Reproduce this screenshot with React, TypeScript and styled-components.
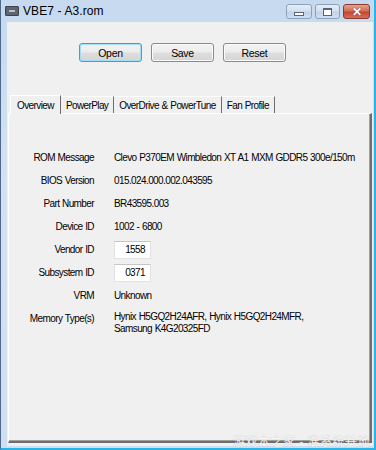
import React from 'react'
import styled, { createGlobalStyle } from 'styled-components'

const GlobalStyle = createGlobalStyle`
  html, body {
    margin: 0;
    padding: 0;
    background: #ffffff;
  }
  body {
    font-family: "Liberation Sans", Arial, sans-serif;
  }
`

const Window = styled.div`
  position: relative;
  width: 376px;
  height: 450px;
  box-sizing: border-box;
  display: flex;
  flex-direction: column;
  background: linear-gradient(to bottom, #c6d9ef 0%, #d3e2f3 40%, #cfdff1 100%);
  border-left: 1px solid #4d6a8c;
  border-bottom: 2px solid #2bb4e8;
  border-right: 2px solid #2bb4e8;
  overflow: hidden;
`

const TitleBar = styled.div`
  height: 22px;
  display: flex;
  align-items: center;
  padding: 0 4px 0 4px;
  flex-shrink: 0;
`

const AppIcon = styled.div`
  width: 12px;
  height: 8px;
  background: #5d6670;
  border: 1px solid #3c434b;
  border-radius: 1px;
  margin-right: 4px;
  display: flex;
  align-items: center;
  justify-content: center;
  &::after {
    content: '';
    width: 6px;
    height: 2px;
    background: #b9c1c9;
  }
`

const TitleText = styled.div`
  font-size: 12px;
  color: #000;
  flex: 1;
  letter-spacing: 0.1px;
`

const Controls = styled.div`
  display: flex;
  gap: 3px;
  align-self: flex-start;
  margin-top: 4px;
`

const CtrlButton = styled.div<{ $close?: boolean; $w: number }>`
  width: ${p => p.$w}px;
  height: 15px;
  box-sizing: border-box;
  border: 1px solid ${p => (p.$close ? '#8a3b30' : '#8ca1bb')};
  border-radius: 3px;
  background: ${p =>
    p.$close
      ? 'linear-gradient(to bottom, #e7a391 0%, #d36c55 45%, #c4452f 55%, #d5705a 100%)'
      : 'linear-gradient(to bottom, #e6eef8 0%, #d3e0ef 45%, #c2d3e8 55%, #d0def0 100%)'};
  display: flex;
  align-items: center;
  justify-content: center;
`

const MinGlyph = styled.div`
  width: 8px;
  height: 2px;
  margin-top: 4px;
  background: #fff;
  border: 1px solid #56657a;
`

const MaxGlyph = styled.div`
  width: 7px;
  height: 5px;
  background: #fff;
  border: 1px solid #56657a;
  border-top-width: 2px;
`

const CloseGlyph = styled.div`
  color: #fff;
  font-size: 12px;
  font-weight: bold;
  line-height: 1;
  text-shadow: 0 0 1px #6a2118;
`

const Client = styled.div`
  flex: 1;
  margin: 0 1px 2px 6px;
  background: #f0f0f0;
  display: flex;
  flex-direction: column;
  position: relative;
  font-size: 10px;
  letter-spacing: -0.6px;
  word-spacing: 0.5px;
`

const ButtonRow = styled.div`
  display: flex;
  justify-content: center;
  gap: 9px;
  padding: 21px 0 0 0;
  margin-left: -15px;
  font-size: 10.5px;
  letter-spacing: -0.3px;
`

const PushButton = styled.div<{ $default?: boolean }>`
  width: 63px;
  height: 19px;
  box-sizing: border-box;
  border: 1px solid ${p => (p.$default ? '#3c9fd8' : '#8a8a8a')};
  box-shadow: ${p => (p.$default ? 'inset 0 0 0 1px #a6dcf5' : 'inset 0 0 0 1px #fbfbfb')};
  border-radius: 3px;
  background: linear-gradient(to bottom, #f3f3f3 0%, #ececec 48%, #dedede 52%, #d5d5d5 100%);
  color: #000;
  display: flex;
  align-items: center;
  justify-content: center;
`

const TabStrip = styled.div`
  display: flex;
  margin: 33px 0 0 3px;
  height: 18px;
  align-items: flex-end;
  position: relative;
  z-index: 1;
`

const Tab = styled.div<{ $active?: boolean }>`
  height: ${p => (p.$active ? '19px' : '17px')};
  box-sizing: border-box;
  padding: ${p => (p.$active ? '0 6px' : '0 5px 0 4px')};
  color: #000;
  display: flex;
  align-items: center;
  background: #f0f0f0;
  border-top: 1px solid #ffffff;
  border-left: 1px solid ${p => (p.$active ? '#ffffff' : '#f0f0f0')};
  border-right: 1px solid #6e6e6e;
  margin-bottom: ${p => (p.$active ? '-1px' : '0')};
  white-space: nowrap;
`

const Panel = styled.div`
  flex: 1;
  margin: 0 1px 3px 1px;
  border-top: 1px solid #ffffff;
  border-left: 1px solid #ffffff;
  border-right: 2px solid #6e6e6e;
  border-bottom: 2px solid #6e6e6e;
  box-shadow: inset -1px -1px 0 #a0a0a0;
  padding-top: 32px;
`

const InfoGrid = styled.div`
  display: grid;
  grid-template-columns: 85px 1fr;
  column-gap: 20px;
  grid-auto-rows: 23px;
  color: #000;
`

const Label = styled.div`
  text-align: right;
  display: flex;
  align-items: center;
  justify-content: flex-end;
  white-space: nowrap;
`

const Value = styled.div<{ $multi?: boolean }>`
  display: flex;
  align-items: ${p => (p.$multi ? 'flex-start' : 'center')};
  padding-top: ${p => (p.$multi ? '4px' : '0')};
  line-height: 12px;
  white-space: ${p => (p.$multi ? 'pre-line' : 'nowrap')};
`

const Field = styled.div`
  width: 37px;
  height: 18px;
  box-sizing: border-box;
  background: #ffffff;
  border: 1px solid #e2e2e2;
  border-top-color: #c4c6cb;
  text-align: right;
  padding-right: 5px;
  line-height: 16px;
`

const Watermark = styled.div`
  position: absolute;
  right: 3px;
  bottom: -3px;
  font-family: "Noto Sans CJK SC", sans-serif;
  font-size: 12px;
  color: rgba(255, 255, 255, 0.9);
  letter-spacing: 0.5px;
  text-shadow: 0 0 1px rgba(120, 120, 120, 0.5);
`

const rows: { label: string; value: string; field?: boolean }[] = [
  { label: 'ROM Message', value: 'Clevo P370EM Wimbledon XT A1 MXM GDDR5 300e/150m' },
  { label: 'BIOS Version', value: '015.024.000.002.043595' },
  { label: 'Part Number', value: 'BR43595.003' },
  { label: 'Device ID', value: '1002 - 6800' },
  { label: 'Vendor ID', value: '1558', field: true },
  { label: 'Subsystem ID', value: '0371', field: true },
  { label: 'VRM', value: 'Unknown' },
]

export default function App() {
  return (
    <>
      <GlobalStyle />
      <Window>
        <TitleBar>
          <AppIcon />
          <TitleText>VBE7 - A3.rom</TitleText>
          <Controls>
            <CtrlButton $w={26}><MinGlyph /></CtrlButton>
            <CtrlButton $w={25}><MaxGlyph /></CtrlButton>
            <CtrlButton $w={27} $close><CloseGlyph>✕</CloseGlyph></CtrlButton>
          </Controls>
        </TitleBar>
        <Client>
          <ButtonRow>
            <PushButton $default>Open</PushButton>
            <PushButton>Save</PushButton>
            <PushButton>Reset</PushButton>
          </ButtonRow>
          <TabStrip>
            <Tab $active>Overview</Tab>
            <Tab>PowerPlay</Tab>
            <Tab>OverDrive &amp; PowerTune</Tab>
            <Tab>Fan Profile</Tab>
          </TabStrip>
          <Panel>
            <InfoGrid>
              {rows.map(r => (
                <React.Fragment key={r.label}>
                  <Label>{r.label}</Label>
                  <Value>{r.field ? <Field>{r.value}</Field> : r.value}</Value>
                </React.Fragment>
              ))}
              <Label>Memory Type(s)</Label>
              <Value $multi>{'Hynix H5GQ2H24AFR, Hynix H5GQ2H24MFR,\nSamsung K4G20325FD'}</Value>
            </InfoGrid>
          </Panel>
          <Watermark>游戏本之家 - 准系统基地</Watermark>
        </Client>
      </Window>
    </>
  )
}
